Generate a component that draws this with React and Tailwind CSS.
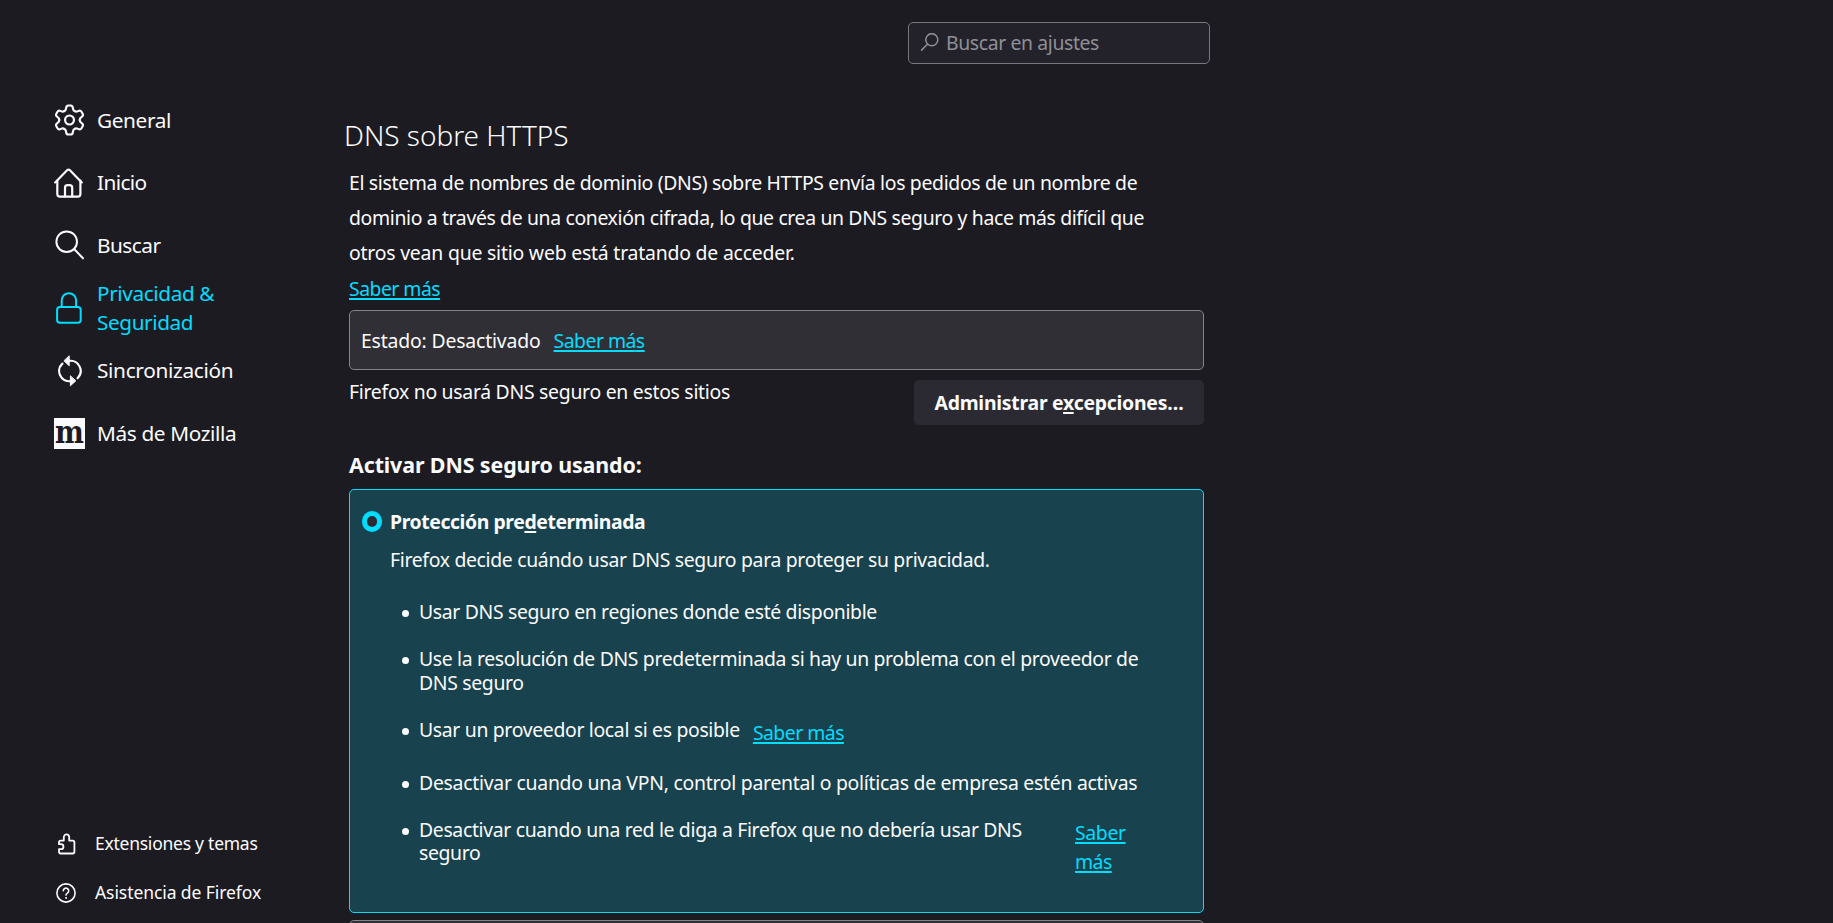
import React from 'react';

const iconProps = {
  fill: 'none',
  stroke: 'currentColor',
  strokeLinecap: 'round',
  strokeLinejoin: 'round',
  strokeWidth: 2,
};

function GearIcon() {
  return (
    <svg width="32" height="34" viewBox="-16 -17 32 34" {...iconProps} strokeWidth="2.2">
      {[0, 60, 120, 180, 240, 300].map((angle) => (
        <path
          key={angle}
          transform={`rotate(${angle})`}
          d="M-5.4 -9.2C-4.2 -9.6 -3.6 -10.4 -3.5 -12.2C-3.4 -14 -2.6 -15 -1.2 -15H1.2C2.6 -15 3.4 -14 3.5 -12.2C3.6 -10.4 4.2 -9.6 5.4 -9.2"
        />
      ))}
      <circle r="4.6" />
    </svg>
  );
}

function HomeIcon() {
  return (
    <svg className="mr-px" width="30" height="30" viewBox="0 0 30 30" {...iconProps} strokeWidth="2.2">
      <path d="M1.2 14.4L13.3 2.1Q14.5 1 15.7 2.1L27.8 14.4" />
      <path d="M3.3 12.5V26Q3.3 28.6 6 28.6H23.8Q26.4 28.6 26.4 26V12.5" />
      <path d="M11 28.4V19.8Q11 17.2 13.4 17.2H15.6Q18.2 17.2 18.2 19.8V28.4" />
    </svg>
  );
}

function SearchIcon() {
  return (
    <svg width="30" height="30" viewBox="0 0 30 30" {...iconProps}>
      <circle cx="11.7" cy="11.7" r="10.3" />
      <path d="M19.3 19.3L28 28.2" />
    </svg>
  );
}

function LockIcon() {
  return (
    <svg className="mr-px mb-px" width="26" height="32" viewBox="0 0 26 32" {...iconProps}>
      <rect x="1.1" y="15.1" width="23.6" height="15.6" rx="2.8" />
      <path d="M5.7 15V8.4A7.2 7.2 0 0 1 20.1 8.4V15" />
    </svg>
  );
}

function SyncIcon() {
  return (
    <svg width="24" height="32" viewBox="0 0 24 32" {...iconProps} strokeWidth="2.2">
      <path d="M11.5 5.8A10.2 10.2 0 0 1 19.6 23.2" />
      <path d="M4.4 8.6A10.2 10.2 0 0 0 12.5 26.2" />
      <path d="M11.2 1.2V10.8L6.2 6Z" fill="currentColor" strokeWidth="1" />
      <path d="M12.4 21.2V30.8L17.6 26Z" fill="currentColor" strokeWidth="1" />
    </svg>
  );
}

function MozillaIcon() {
  return (
    <span className="flex h-[31px] w-[31px] items-center justify-center bg-[#fbfbfe]">
      <span className="-mt-[2px] scale-x-[0.88] font-['DejaVu_Serif',serif] text-[31px] leading-[37px] font-bold text-[#1c1b22]">
        m
      </span>
    </span>
  );
}

function PuzzleIcon() {
  return (
    <svg width="20" height="22" viewBox="0 0 20 22" {...iconProps} strokeWidth="1.8">
      <path d="M2 11.2V9.3Q2 7.6 3.7 7.6H6.8V4.3A2.7 2.9 0 0 1 12.2 4.3V7.6H15.7Q17.4 7.6 17.4 9.3V18.8Q17.4 20.5 15.7 20.5H3.7Q2 20.5 2 18.8V16.1H4A2.4 2.4 0 0 0 4 11.2Z" />
    </svg>
  );
}

function HelpIcon() {
  return (
    <svg width="20" height="20" viewBox="0 0 20 20" {...iconProps} strokeWidth="1.6">
      <circle cx="10" cy="10" r="9.1" />
      <path d="M7.3 7.8A2.7 2.7 0 1 1 11.4 10.1Q10 10.9 10 12.1" />
      <circle cx="10" cy="14.9" r="0.5" fill="currentColor" strokeWidth="1" />
    </svg>
  );
}

function NavItem({ icon, children, className = '' }) {
  return (
    <a className={`flex h-[62.6px] items-center ${className}`}>
      <span className="flex w-[31px] shrink-0 items-center justify-center">{icon}</span>
      <span className="ml-[12px] text-[20.8px] leading-[29px] whitespace-nowrap">{children}</span>
    </a>
  );
}

function Link({ children, className = '' }) {
  return (
    <a
      className={`tracking-[-0.52px] whitespace-nowrap text-[#00ddff] underline decoration-2 underline-offset-2 [text-decoration-skip-ink:none] ${className}`}
    >
      {children}
    </a>
  );
}

function AccessKey({ children }) {
  return (
    <span className="underline decoration-2 underline-offset-2 [text-decoration-skip-ink:none]">{children}</span>
  );
}

function Bullet({ children }) {
  return (
    <li className="flex items-start">
      <span className="mt-[10px] mr-[10px] h-[7px] w-[7px] shrink-0 rounded-full bg-[#fbfbfe]" />
      {children}
    </li>
  );
}

export default function App() {
  return (
    <div className="flex h-[923px] w-full overflow-hidden bg-[#1c1b22] font-['Noto_Sans',sans-serif] text-[19.4px] text-[#fbfbfe]">
      <aside className="flex w-[349px] shrink-0 flex-col pt-[89px] pl-[54px]">
        <nav>
          <NavItem icon={<GearIcon />}>
            <span className="tracking-[-0.38px]">General</span>
          </NavItem>
          <NavItem icon={<HomeIcon />}>
            <span className="tracking-[-0.6px]">Inicio</span>
          </NavItem>
          <NavItem icon={<SearchIcon />}>
            <span className="tracking-[-0.5px]">Buscar</span>
          </NavItem>
          <NavItem icon={<LockIcon />} className="text-[#00ddff]">
            <span className="block tracking-[-0.4px]">Privacidad &amp;</span>
            <span className="block tracking-[-0.42px]">Seguridad</span>
          </NavItem>
          <NavItem icon={<SyncIcon />}>
            <span className="tracking-[-0.33px]">Sincronización</span>
          </NavItem>
          <NavItem icon={<MozillaIcon />}>
            <span className="tracking-[-0.38px]">Más de Mozilla</span>
          </NavItem>
        </nav>
        <div className="mt-auto pb-[6px] text-[17.5px]">
          <a className="flex h-[49px] items-center gap-[18px] pl-[3px]">
            <PuzzleIcon />
            <span className="tracking-[-0.25px] whitespace-nowrap">Extensiones y temas</span>
          </a>
          <a className="flex h-[49px] items-center gap-[19px] pl-[2px]">
            <HelpIcon />
            <span className="tracking-[-0.08px] whitespace-nowrap">Asistencia de Firefox</span>
          </a>
        </div>
      </aside>

      <main className="flex w-[861px] shrink-0 flex-col pt-[22px]">
        <div className="flex h-[42px] w-[302px] shrink-0 items-center self-end rounded-[5px] border border-[#78777e] bg-[#23222b] pl-[11px] text-[#8f8f96]">
          <svg width="20" height="20" viewBox="0 0 20 20" {...iconProps} strokeWidth="1.5">
            <circle cx="11.8" cy="6.7" r="6" />
            <path d="M7.4 11.3L1.6 17.1" />
          </svg>
          <span className="ml-[6px] tracking-[-0.38px]">Buscar en ajustes</span>
        </div>

        <section className="w-[855px]">
          <h1 className="mt-[55px] -ml-[5px] text-[28px] leading-[32px] font-light tracking-[-0.02px]">
            DNS sobre HTTPS
          </h1>
          <p className="mt-[14px] leading-[35px] whitespace-nowrap">
            <span className="block tracking-[-0.325px]">
              El sistema de nombres de dominio (DNS) sobre HTTPS envía los pedidos de un nombre de
            </span>
            <span className="block tracking-[-0.352px]">
              dominio a través de una conexión cifrada, lo que crea un DNS seguro y hace más difícil que
            </span>
            <span className="block tracking-[-0.2px]">otros vean que sitio web está tratando de acceder.</span>
          </p>
          <div className="mt-[4px] leading-[29px]">
            <Link>Saber más</Link>
          </div>

          <div className="mt-[7px] flex h-[60px] items-center rounded-[5px] border border-[#84838a] bg-[#302f35] pt-px pl-[11px]">
            <span className="tracking-[-0.17px]">Estado: Desactivado</span>
            <Link className="ml-[13px]">Saber más</Link>
          </div>

          <div className="mt-[7px] flex items-start justify-between">
            <span className="leading-[29px] tracking-[-0.28px]">Firefox no usará DNS seguro en estos sitios</span>
            <button className="mt-[3px] h-[45px] w-[290px] rounded-[5px] bg-[#2b2a32] font-bold tracking-[-0.24px]">
              Administrar e<AccessKey>x</AccessKey>cepciones…
            </button>
          </div>

          <h2 className="mt-[25px] text-[21.4px] leading-[30px] font-bold tracking-[-0.1px]">
            Activar DNS seguro usando:
          </h2>

          <div className="mt-[9px] h-[424px] rounded-[5px] border border-[#00ddff] bg-[#18424d] pt-[17px] pl-[12px]">
            <div className="flex items-center">
              <span className="-mt-px h-[21px] w-[20px] rounded-full border-[5px] border-[#00ddff] bg-[#2b2a33]" />
              <span className="ml-[8px] leading-[30px] font-bold tracking-[-0.41px]">
                Protección pre<AccessKey>d</AccessKey>eterminada
              </span>
            </div>
            <p className="mt-[8px] ml-[28px] leading-[29px] tracking-[-0.32px]">
              Firefox decide cuándo usar DNS seguro para proteger su privacidad.
            </p>
            <ul className="mt-[26.4px] ml-[40px] flex flex-col gap-[23.5px] leading-[23.4px] whitespace-nowrap">
              <Bullet>
                <span className="tracking-[-0.335px]">Usar DNS seguro en regiones donde esté disponible</span>
              </Bullet>
              <Bullet>
                <span>
                  <span className="block tracking-[-0.345px]">
                    Use la resolución de DNS predeterminada si hay un problema con el proveedor de
                  </span>
                  <span className="block tracking-[-0.33px]">DNS seguro</span>
                </span>
              </Bullet>
              <Bullet>
                <span className="tracking-[-0.33px]">Usar un proveedor local si es posible</span>
                <Link className="ml-[13px] leading-[29.5px]">Saber más</Link>
              </Bullet>
              <Bullet>
                <span className="tracking-[-0.26px]">
                  Desactivar cuando una VPN, control parental o políticas de empresa estén activas
                </span>
              </Bullet>
              <Bullet>
                <span className="w-[656px]">
                  <span className="block tracking-[-0.335px]">
                    Desactivar cuando una red le diga a Firefox que no debería usar DNS
                  </span>
                  <span className="block tracking-[-0.35px]">seguro</span>
                </span>
                <Link className="leading-[29px]">
                  <span className="tracking-[-0.35px]">Saber</span>
                  <br />
                  más
                </Link>
              </Bullet>
            </ul>
          </div>

          <div className="mt-[7px] h-[60px] rounded-[5px] border border-[#84838a] bg-[#302f35]" />
        </section>
      </main>
    </div>
  );
}
